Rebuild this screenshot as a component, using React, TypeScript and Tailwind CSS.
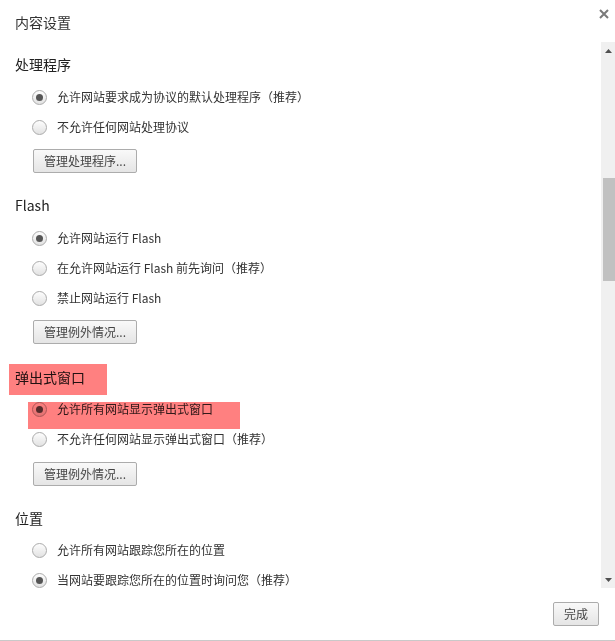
import React from 'react';

const font = { fontFamily: '"Noto Sans CJK SC", "Noto Sans", sans-serif' };

const Radio = ({ checked }: { checked?: boolean }) => (
  <span className="relative flex h-[15px] w-[15px] shrink-0 items-center justify-center rounded-full border border-[#ababab] bg-gradient-to-b from-[#fdfdfd] to-[#e2e2e2]">
    {checked && <span className="h-[7px] w-[7px] rounded-full bg-[#555]" />}
  </span>
);

const Option = ({ label, checked, highlight }: { label: string; checked?: boolean; highlight?: boolean }) => (
  <div className="relative flex h-[30px] items-center gap-[10px] pl-[17px] text-[12px] text-[#333]">
    <Radio checked={checked} />
    <span>{label}</span>
    {highlight && <span className="absolute left-[13px] top-[8px] h-[27px] w-[212px] bg-[#ff8080] mix-blend-multiply" />}
  </div>
);

const Btn = ({ children }: { children: React.ReactNode }) => (
  <button className="flex h-[24px] items-center rounded-[2px] border border-[#acacac] bg-gradient-to-b from-[#f9f9f9] to-[#e5e5e5] px-[10px] text-[12px] leading-none text-[#444]">
    {children}
  </button>
);

const Heading = ({ children, highlight }: { children: React.ReactNode; highlight?: boolean }) => (
  <div className="relative h-[20px] text-[14px] leading-[20px] text-[#222]">
    {children}
    {highlight && <span className="absolute left-[-6px] top-[-3px] h-[31px] w-[98px] bg-[#ff8080] mix-blend-multiply" />}
  </div>
);

export default function App() {
  return (
    <div style={font} className="flex h-[641px] w-[615px] flex-col overflow-hidden border-b border-[#c9c9c9] bg-white">
      <div className="flex h-[42px] shrink-0 items-start justify-between pl-[15px] pr-[6px]">
        <span className="mt-[12px] text-[14px] leading-[20px] text-[#333]">内容设置</span>
        <svg width="10" height="10" viewBox="0 0 10 10" className="mt-[9px]">
          <path d="M1 1 L9 9 M9 1 L1 9" stroke="#7a7a7a" strokeWidth="2" />
        </svg>
      </div>

      <div className="flex h-[546px] shrink-0">
        <div className="flex-1 overflow-hidden px-[15px]">
          <div className="mt-[12px]">
            <Heading>处理程序</Heading>
            <div className="mt-[8px]">
              <Option label="允许网站要求成为协议的默认处理程序（推荐）" checked />
              <Option label="不允许任何网站处理协议" />
            </div>
            <div className="mt-[7px] flex pl-[18px]"><Btn>管理处理程序...</Btn></div>
          </div>

          <div className="mt-[22px]">
            <Heading>Flash</Heading>
            <div className="mt-[8px]">
              <Option label="允许网站运行 Flash" checked />
              <Option label="在允许网站运行 Flash 前先询问（推荐）" />
              <Option label="禁止网站运行 Flash" />
            </div>
            <div className="mt-[7px] flex pl-[18px]"><Btn>管理例外情况...</Btn></div>
          </div>

          <div className="mt-[23px]">
            <Heading highlight>弹出式窗口</Heading>
            <div className="mt-[7px]">
              <Option label="允许所有网站显示弹出式窗口" checked highlight />
              <Option label="不允许任何网站显示弹出式窗口（推荐）" />
            </div>
            <div className="mt-[8px] flex pl-[18px]"><Btn>管理例外情况...</Btn></div>
          </div>

          <div className="mt-[22px]">
            <Heading>位置</Heading>
            <div className="mt-[7px]">
              <Option label="允许所有网站跟踪您所在的位置" />
              <Option label="当网站要跟踪您所在的位置时询问您（推荐）" checked />
            </div>
          </div>
        </div>

        <div className="flex w-[14px] shrink-0 flex-col bg-[#f0f0f0]">
          <div className="flex h-[17px] items-center justify-center">
            <svg width="7" height="4" viewBox="0 0 7 4"><path d="M0 4 L3.5 0 L7 4 Z" fill="#505050" /></svg>
          </div>
          <div className="ml-[2px] mt-[119px] h-[103px] bg-[#c1c1c1]" />
          <div className="flex-1" />
          <div className="flex h-[17px] items-center justify-center">
            <svg width="7" height="4" viewBox="0 0 7 4"><path d="M0 0 L7 0 L3.5 4 Z" fill="#505050" /></svg>
          </div>
        </div>
      </div>

      <div className="flex flex-1 items-start justify-end pr-[16px] pt-[14px]">
        <Btn>完成</Btn>
      </div>
    </div>
  );
}
